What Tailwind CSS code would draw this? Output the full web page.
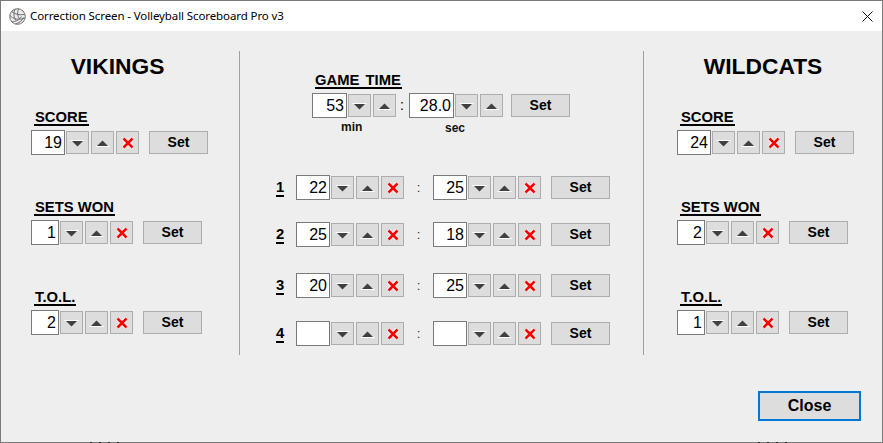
<!DOCTYPE html>
<html lang="en">
<head>
  <meta charset="UTF-8">
  <title>Correction Screen - Volleyball Scoreboard Pro v3</title>
  <script src="https://cdn.jsdelivr.net/npm/@tailwindcss/browser@4"></script>
</head>
<body class="bg-[#eeeeee] font-['Liberation_Sans',sans-serif] text-black overflow-hidden">
  <svg class="hidden">
    <symbol id="down" viewBox="0 0 21 21"><path d="M3.500 8.500h14" stroke="#fff" stroke-width="1"/><path d="M5 9h11l-5.500 5.500z" fill="#404040"/></symbol>
    <symbol id="up" viewBox="0 0 21 21"><path d="M3.500 14.500h14" stroke="#fff" stroke-width="1"/><path d="M5 14h11l-5.500-5.500z" fill="#404040"/></symbol>
    <symbol id="clear" viewBox="0 0 21 21"><path d="M6.500 6.500l9 9M15.500 6.500l-9 9" stroke="#fff" stroke-width="4.500"/><path d="M6.500 6.500l9 9M15.500 6.500l-9 9" stroke="#ff0000" stroke-width="2.600"/></symbol>
  </svg>

  <div class="relative w-[883px] h-[443px] flex flex-col border border-[#7a7a7a]">
    <!-- title bar -->
    <div class="h-[30px] bg-white flex items-center pl-[8px] pr-[9px] shrink-0">
      <svg class="w-[17px] h-[17px]" viewBox="0 0 17 17" fill="none" stroke="#6f6f6f" stroke-width="1">
        <circle cx="8.500" cy="8.500" r="7.800" fill="#ececec"/>
        <path d="M6 1.200C4.300 5 4.600 9 6.600 12.400M9.500 .8C8 4.500 8.500 8 10.500 11M2.800 3.600c3 2.600 7 3.800 13 2.800M1 7.500c3 3.500 8.500 5 15 2.500M3 14c3-.5 7-1.500 9.500-5.500M6.500 16c3-1 6.500-3 8-6.500"/>
      </svg>
      <span class="ml-[4px] text-[11.5px] font-['Noto_Sans',sans-serif] tracking-[-0.1px]">Correction Screen - Volleyball Scoreboard Pro v3</span>
      <svg class="ml-auto w-[11px] h-[11px]" viewBox="0 0 11 11" stroke="#111" stroke-width="1"><path d="M.5.5l10 10M10.500.5l-10 10"/></svg>
    </div>

    <div class="flex pt-[20px]">
      <!-- home team -->
      <section class="w-[239px] h-[304px] border-r border-[#a0a0a0] shrink-0">
        <h2 class="text-center text-[22.8px] leading-[26px] font-bold pr-[5px] mt-[2px]">VIKINGS</h2>
        <div class="pl-[30px] mt-[29px] flex flex-col gap-[43px]">
          <div>
            <div class="w-fit ml-[3px] px-[1px] h-[18px] border-b-2 border-black text-[14.8px] leading-[18px] font-bold">SCORE</div>
            <div class="flex items-center mt-[4px]">
              <div class="w-[34px] h-[25px] bg-white border border-[#7a7a7a] text-right pr-[2px] text-[16px] leading-[23px]">19</div>
              <button class="ml-[1px] w-[23px] h-[23px] bg-[#dddddd] border border-[#adadad]"><svg class="w-full h-full"><use href="#down"/></svg></button>
              <button class="ml-[2px] w-[23px] h-[23px] bg-[#dddddd] border border-[#adadad]"><svg class="w-full h-full"><use href="#up"/></svg></button>
              <button class="ml-[2px] w-[23px] h-[23px] bg-[#dddddd] border border-[#adadad]"><svg class="w-full h-full"><use href="#clear"/></svg></button>
              <button class="ml-[10px] w-[59px] h-[23px] bg-[#dddddd] border border-[#adadad] text-[14px] font-bold">Set</button>
            </div>
          </div>
          <div>
            <div class="w-fit ml-[3px] px-[1px] h-[18px] border-b-2 border-black text-[14.8px] leading-[18px] font-bold">SETS WON</div>
            <div class="flex items-center mt-[4px]">
              <div class="w-[28px] h-[25px] bg-white border border-[#7a7a7a] text-right pr-[2px] text-[16px] leading-[23px]">1</div>
              <button class="ml-[1px] w-[23px] h-[23px] bg-[#dddddd] border border-[#adadad]"><svg class="w-full h-full"><use href="#down"/></svg></button>
              <button class="ml-[2px] w-[23px] h-[23px] bg-[#dddddd] border border-[#adadad]"><svg class="w-full h-full"><use href="#up"/></svg></button>
              <button class="ml-[2px] w-[23px] h-[23px] bg-[#dddddd] border border-[#adadad]"><svg class="w-full h-full"><use href="#clear"/></svg></button>
              <button class="ml-[10px] w-[59px] h-[23px] bg-[#dddddd] border border-[#adadad] text-[14px] font-bold">Set</button>
            </div>
          </div>
          <div>
            <div class="w-fit ml-[3px] px-[1px] h-[18px] border-b-2 border-black text-[14.8px] leading-[18px] font-bold">T.O.L.</div>
            <div class="flex items-center mt-[4px]">
              <div class="w-[28px] h-[25px] bg-white border border-[#7a7a7a] text-right pr-[2px] text-[16px] leading-[23px]">2</div>
              <button class="ml-[1px] w-[23px] h-[23px] bg-[#dddddd] border border-[#adadad]"><svg class="w-full h-full"><use href="#down"/></svg></button>
              <button class="ml-[2px] w-[23px] h-[23px] bg-[#dddddd] border border-[#adadad]"><svg class="w-full h-full"><use href="#up"/></svg></button>
              <button class="ml-[2px] w-[23px] h-[23px] bg-[#dddddd] border border-[#adadad]"><svg class="w-full h-full"><use href="#clear"/></svg></button>
              <button class="ml-[10px] w-[59px] h-[23px] bg-[#dddddd] border border-[#adadad] text-[14px] font-bold">Set</button>
            </div>
          </div>
        </div>
      </section>

      <!-- game time and set scores -->
      <section class="w-[403px] h-[304px] shrink-0">
        <div class="w-fit ml-[75px] mt-[20px] h-[18px] border-b-2 border-black text-[14.8px] leading-[18px] font-bold pr-[1px] [word-spacing:2px]">GAME TIME</div>
        <div class="flex items-center ml-[72px] mt-[4px]">
          <div class="w-[35px] h-[25px] bg-white border border-[#7a7a7a] text-right pr-[2px] text-[16px] leading-[23px]">53</div>
          <button class="ml-[1px] w-[23px] h-[23px] bg-[#dddddd] border border-[#adadad]"><svg class="w-full h-full"><use href="#down"/></svg></button>
          <button class="ml-[2px] w-[23px] h-[23px] bg-[#dddddd] border border-[#adadad]"><svg class="w-full h-full"><use href="#up"/></svg></button>
          <span class="w-[12px] mr-[1px] text-center text-[14px]">:</span>
          <div class="w-[45px] h-[25px] bg-white border border-[#7a7a7a] text-right pr-[2px] text-[16px] leading-[23px]">28.0</div>
          <button class="ml-[1px] w-[23px] h-[23px] bg-[#dddddd] border border-[#adadad]"><svg class="w-full h-full"><use href="#down"/></svg></button>
          <button class="ml-[2px] w-[23px] h-[23px] bg-[#dddddd] border border-[#adadad]"><svg class="w-full h-full"><use href="#up"/></svg></button>
          <button class="ml-[8px] w-[59px] h-[23px] bg-[#dddddd] border border-[#adadad] text-[14px] font-bold">Set</button>
        </div>
        <div class="flex items-start ml-[101px] mt-[2px] h-[15px] text-[12px] leading-[14px] font-bold text-[#111]">
          <span class="w-[104px]">min</span>
          <span class="mt-[1px]">sec</span>
        </div>

        <div class="flex items-center ml-[36px] mt-[40px]">
          <div class="w-[8px] h-[19px] border-b-2 border-black text-[14.8px] leading-[19px] font-bold">1</div>
          <div class="ml-[12px] w-[34px] h-[25px] bg-white border border-[#7a7a7a] text-right pr-[2px] text-[16px] leading-[23px]">22</div>
          <button class="ml-[1px] w-[23px] h-[23px] bg-[#dddddd] border border-[#adadad]"><svg class="w-full h-full"><use href="#down"/></svg></button>
          <button class="ml-[2px] w-[23px] h-[23px] bg-[#dddddd] border border-[#adadad]"><svg class="w-full h-full"><use href="#up"/></svg></button>
          <button class="ml-[2px] w-[23px] h-[23px] bg-[#dddddd] border border-[#adadad]"><svg class="w-full h-full"><use href="#clear"/></svg></button>
          <span class="w-[29px] text-center text-[13px] text-[#333]">:</span>
          <div class="w-[34px] h-[25px] bg-white border border-[#7a7a7a] text-right pr-[2px] text-[16px] leading-[23px]">25</div>
          <button class="ml-[1px] w-[23px] h-[23px] bg-[#dddddd] border border-[#adadad]"><svg class="w-full h-full"><use href="#down"/></svg></button>
          <button class="ml-[2px] w-[23px] h-[23px] bg-[#dddddd] border border-[#adadad]"><svg class="w-full h-full"><use href="#up"/></svg></button>
          <button class="ml-[2px] w-[23px] h-[23px] bg-[#dddddd] border border-[#adadad]"><svg class="w-full h-full"><use href="#clear"/></svg></button>
          <button class="ml-[10px] w-[59px] h-[23px] bg-[#dddddd] border border-[#adadad] text-[14px] font-bold">Set</button>
        </div>
        <div class="flex items-center ml-[36px] mt-[22px]">
          <div class="w-[8px] h-[19px] border-b-2 border-black text-[14.8px] leading-[19px] font-bold">2</div>
          <div class="ml-[12px] w-[34px] h-[25px] bg-white border border-[#7a7a7a] text-right pr-[2px] text-[16px] leading-[23px]">25</div>
          <button class="ml-[1px] w-[23px] h-[23px] bg-[#dddddd] border border-[#adadad]"><svg class="w-full h-full"><use href="#down"/></svg></button>
          <button class="ml-[2px] w-[23px] h-[23px] bg-[#dddddd] border border-[#adadad]"><svg class="w-full h-full"><use href="#up"/></svg></button>
          <button class="ml-[2px] w-[23px] h-[23px] bg-[#dddddd] border border-[#adadad]"><svg class="w-full h-full"><use href="#clear"/></svg></button>
          <span class="w-[29px] text-center text-[13px] text-[#333]">:</span>
          <div class="w-[34px] h-[25px] bg-white border border-[#7a7a7a] text-right pr-[2px] text-[16px] leading-[23px]">18</div>
          <button class="ml-[1px] w-[23px] h-[23px] bg-[#dddddd] border border-[#adadad]"><svg class="w-full h-full"><use href="#down"/></svg></button>
          <button class="ml-[2px] w-[23px] h-[23px] bg-[#dddddd] border border-[#adadad]"><svg class="w-full h-full"><use href="#up"/></svg></button>
          <button class="ml-[2px] w-[23px] h-[23px] bg-[#dddddd] border border-[#adadad]"><svg class="w-full h-full"><use href="#clear"/></svg></button>
          <button class="ml-[10px] w-[59px] h-[23px] bg-[#dddddd] border border-[#adadad] text-[14px] font-bold">Set</button>
        </div>
        <div class="flex items-center ml-[36px] mt-[26px]">
          <div class="w-[8px] h-[19px] border-b-2 border-black text-[14.8px] leading-[19px] font-bold">3</div>
          <div class="ml-[12px] w-[34px] h-[25px] bg-white border border-[#7a7a7a] text-right pr-[2px] text-[16px] leading-[23px]">20</div>
          <button class="ml-[1px] w-[23px] h-[23px] bg-[#dddddd] border border-[#adadad]"><svg class="w-full h-full"><use href="#down"/></svg></button>
          <button class="ml-[2px] w-[23px] h-[23px] bg-[#dddddd] border border-[#adadad]"><svg class="w-full h-full"><use href="#up"/></svg></button>
          <button class="ml-[2px] w-[23px] h-[23px] bg-[#dddddd] border border-[#adadad]"><svg class="w-full h-full"><use href="#clear"/></svg></button>
          <span class="w-[29px] text-center text-[13px] text-[#333]">:</span>
          <div class="w-[34px] h-[25px] bg-white border border-[#7a7a7a] text-right pr-[2px] text-[16px] leading-[23px]">25</div>
          <button class="ml-[1px] w-[23px] h-[23px] bg-[#dddddd] border border-[#adadad]"><svg class="w-full h-full"><use href="#down"/></svg></button>
          <button class="ml-[2px] w-[23px] h-[23px] bg-[#dddddd] border border-[#adadad]"><svg class="w-full h-full"><use href="#up"/></svg></button>
          <button class="ml-[2px] w-[23px] h-[23px] bg-[#dddddd] border border-[#adadad]"><svg class="w-full h-full"><use href="#clear"/></svg></button>
          <button class="ml-[10px] w-[59px] h-[23px] bg-[#dddddd] border border-[#adadad] text-[14px] font-bold">Set</button>
        </div>
        <div class="flex items-center ml-[36px] mt-[23px]">
          <div class="w-[8px] h-[19px] border-b-2 border-black text-[14.8px] leading-[19px] font-bold">4</div>
          <div class="ml-[12px] w-[34px] h-[25px] bg-white border border-[#7a7a7a]"></div>
          <button class="ml-[1px] w-[23px] h-[23px] bg-[#dddddd] border border-[#adadad]"><svg class="w-full h-full"><use href="#down"/></svg></button>
          <button class="ml-[2px] w-[23px] h-[23px] bg-[#dddddd] border border-[#adadad]"><svg class="w-full h-full"><use href="#up"/></svg></button>
          <button class="ml-[2px] w-[23px] h-[23px] bg-[#dddddd] border border-[#adadad]"><svg class="w-full h-full"><use href="#clear"/></svg></button>
          <span class="w-[29px] text-center text-[13px] text-[#333]">:</span>
          <div class="w-[34px] h-[25px] bg-white border border-[#7a7a7a]"></div>
          <button class="ml-[1px] w-[23px] h-[23px] bg-[#dddddd] border border-[#adadad]"><svg class="w-full h-full"><use href="#down"/></svg></button>
          <button class="ml-[2px] w-[23px] h-[23px] bg-[#dddddd] border border-[#adadad]"><svg class="w-full h-full"><use href="#up"/></svg></button>
          <button class="ml-[2px] w-[23px] h-[23px] bg-[#dddddd] border border-[#adadad]"><svg class="w-full h-full"><use href="#clear"/></svg></button>
          <button class="ml-[10px] w-[59px] h-[23px] bg-[#dddddd] border border-[#adadad] text-[14px] font-bold">Set</button>
        </div>
      </section>

      <!-- away team -->
      <section class="flex-1 h-[304px] border-l border-[#a0a0a0]">
        <h2 class="text-center text-[22.8px] leading-[26px] font-bold mt-[2px]">WILDCATS</h2>
        <div class="pl-[33px] mt-[29px] flex flex-col gap-[43px]">
          <div>
            <div class="w-fit ml-[3px] px-[1px] h-[18px] border-b-2 border-black text-[14.8px] leading-[18px] font-bold">SCORE</div>
            <div class="flex items-center mt-[4px]">
              <div class="w-[34px] h-[25px] bg-white border border-[#7a7a7a] text-right pr-[2px] text-[16px] leading-[23px]">24</div>
              <button class="ml-[1px] w-[23px] h-[23px] bg-[#dddddd] border border-[#adadad]"><svg class="w-full h-full"><use href="#down"/></svg></button>
              <button class="ml-[2px] w-[23px] h-[23px] bg-[#dddddd] border border-[#adadad]"><svg class="w-full h-full"><use href="#up"/></svg></button>
              <button class="ml-[2px] w-[23px] h-[23px] bg-[#dddddd] border border-[#adadad]"><svg class="w-full h-full"><use href="#clear"/></svg></button>
              <button class="ml-[10px] w-[59px] h-[23px] bg-[#dddddd] border border-[#adadad] text-[14px] font-bold">Set</button>
            </div>
          </div>
          <div>
            <div class="w-fit ml-[3px] px-[1px] h-[18px] border-b-2 border-black text-[14.8px] leading-[18px] font-bold">SETS WON</div>
            <div class="flex items-center mt-[4px]">
              <div class="w-[28px] h-[25px] bg-white border border-[#7a7a7a] text-right pr-[2px] text-[16px] leading-[23px]">2</div>
              <button class="ml-[1px] w-[23px] h-[23px] bg-[#dddddd] border border-[#adadad]"><svg class="w-full h-full"><use href="#down"/></svg></button>
              <button class="ml-[2px] w-[23px] h-[23px] bg-[#dddddd] border border-[#adadad]"><svg class="w-full h-full"><use href="#up"/></svg></button>
              <button class="ml-[2px] w-[23px] h-[23px] bg-[#dddddd] border border-[#adadad]"><svg class="w-full h-full"><use href="#clear"/></svg></button>
              <button class="ml-[10px] w-[59px] h-[23px] bg-[#dddddd] border border-[#adadad] text-[14px] font-bold">Set</button>
            </div>
          </div>
          <div>
            <div class="w-fit ml-[3px] px-[1px] h-[18px] border-b-2 border-black text-[14.8px] leading-[18px] font-bold">T.O.L.</div>
            <div class="flex items-center mt-[4px]">
              <div class="w-[28px] h-[25px] bg-white border border-[#7a7a7a] text-right pr-[2px] text-[16px] leading-[23px]">1</div>
              <button class="ml-[1px] w-[23px] h-[23px] bg-[#dddddd] border border-[#adadad]"><svg class="w-full h-full"><use href="#down"/></svg></button>
              <button class="ml-[2px] w-[23px] h-[23px] bg-[#dddddd] border border-[#adadad]"><svg class="w-full h-full"><use href="#up"/></svg></button>
              <button class="ml-[2px] w-[23px] h-[23px] bg-[#dddddd] border border-[#adadad]"><svg class="w-full h-full"><use href="#clear"/></svg></button>
              <button class="ml-[10px] w-[59px] h-[23px] bg-[#dddddd] border border-[#adadad] text-[14px] font-bold">Set</button>
            </div>
          </div>
        </div>
      </section>
    </div>

    <div class="flex justify-end pr-[21px] mt-[36px]">
      <button class="w-[103px] h-[30px] bg-[#dddddd] border-2 border-[#0078d7] text-[16px] font-bold">Close</button>
    </div>

    <!-- bits of the window behind, showing at the bottom edge -->
    <div class="absolute left-[89px] bottom-[-1px] flex gap-[7px]">
      <i class="w-[2px] h-[1px] bg-[#222]"></i><i class="w-[2px] h-[1px] bg-[#222]"></i><i class="w-[2px] h-[1px] bg-[#222]"></i><i class="w-[2px] h-[1px] bg-[#222]"></i>
    </div>
    <div class="absolute left-[757px] bottom-[-1px] flex gap-[7px]">
      <i class="w-[2px] h-[1px] bg-[#222]"></i><i class="w-[2px] h-[1px] bg-[#222]"></i><i class="w-[2px] h-[1px] bg-[#222]"></i><i class="w-[2px] h-[1px] bg-[#222]"></i>
    </div>
  </div>
</body>
</html>
